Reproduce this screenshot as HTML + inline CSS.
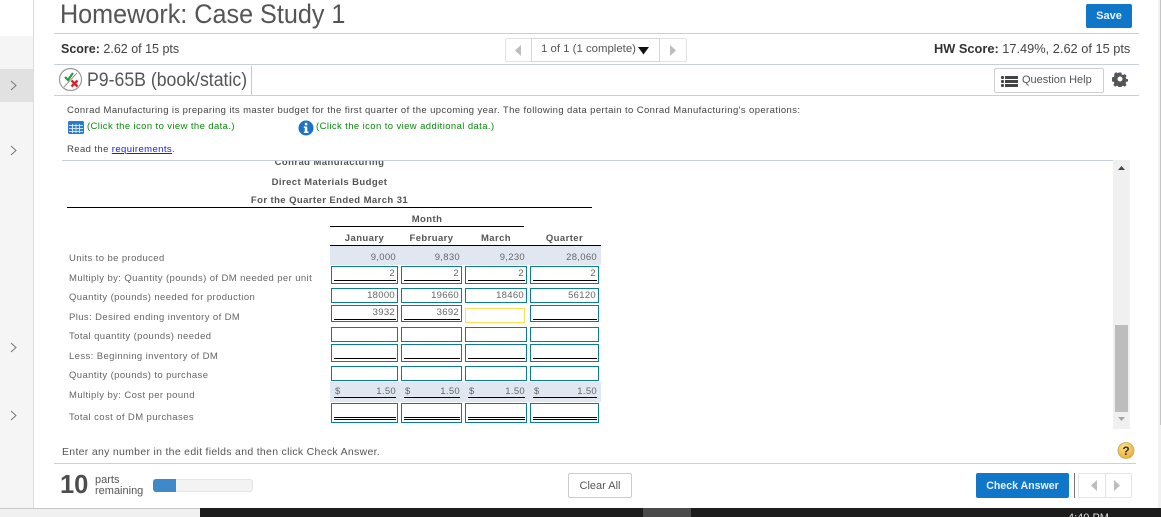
<!DOCTYPE html>
<html><head><meta charset="utf-8">
<style>
html,body{margin:0;padding:0;width:1161px;height:517px;overflow:hidden;background:#fff}
body{position:relative;font-family:"Liberation Sans",sans-serif;color:#4d4d4d}
.a{position:absolute;white-space:nowrap;line-height:1}
.r{position:absolute;box-sizing:border-box}
.l{font-size:9.5px;left:69px;letter-spacing:.4px;color:#666}
.h{font-size:9.5px;font-weight:bold;letter-spacing:.42px;color:#555;text-align:center}
.b{position:absolute;box-sizing:border-box;border:1px solid #0a7c93;background:#fff;font-size:9.5px;color:#666;text-align:right;padding-right:2px;letter-spacing:.3px;line-height:13px}
.u{position:absolute;height:1px;background:#000}
.v{position:absolute;font-size:9.5px;color:#666;text-align:right;letter-spacing:.3px;line-height:1}
</style></head><body>
<div class="r" style="left:0;top:36px;width:33px;height:472px;background:#f5f5f5"></div>
<div class="r" style="left:0;top:69px;width:33px;height:33px;background:#e1e1e1"></div>
<div class="r" style="left:33px;top:0;width:1px;height:508px;background:#dcdcdc"></div>
<svg class="r" style="left:0;top:0" width="33" height="430"><g fill="none" stroke="#777" stroke-width="1"><path d="M11 81l5 4.500-5 4.500M11 146l5 4.500-5 4.500M11 343l5 4.500-5 4.500M11 411l5 4.500-5 4.500"/></g></svg>

<div class="a" style="left:60px;top:1px;font-size:26.5px;color:#555;transform:scaleX(.95);transform-origin:0 0">Homework: Case Study 1</div>
<div class="r" style="left:1086px;top:4px;width:46px;height:24px;background:#0f76c8;border-radius:2px"></div>
<div class="a" style="left:1086px;top:11px;width:46px;text-align:center;font-size:11px;font-weight:bold;color:#e8f2fa">Save</div>
<div class="r" style="left:54px;top:33px;width:1085px;height:1px;background:#c8cfdc"></div>
<div class="a" style="left:61px;top:43px;font-size:12.5px;color:#333"><b>Score:</b> <span style="color:#444">2.62 of 15 pts</span></div>

<div class="r" style="left:505px;top:38px;width:182px;height:24px;border:1px solid #e3e3e3;border-radius:2px;background:#fff"></div>
<div class="r" style="left:531px;top:38px;width:129px;height:24px;border:1px solid #d6d6d6"></div>
<svg class="r" style="left:505px;top:44px" width="176" height="13"><path d="M16 1L10 6.500l6 5.500z" fill="#bdbdbd"/><path d="M165 1l6 5.500-6 5.500z" fill="#bdbdbd"/></svg>
<div class="a" style="left:541px;top:44px;font-size:11.4px;color:#555">1 of 1 (1 complete)</div>
<svg class="r" style="left:638px;top:47px" width="12" height="8"><path d="M0 0h11L5.500 7.500z" fill="#111"/></svg>
<div class="a" style="left:934px;top:43px;font-size:12.8px;color:#444"><b style="color:#333">HW Score:</b> 17.49%, 2.62 of 15 pts</div>
<div class="r" style="left:54px;top:64px;width:1085px;height:1px;background:#c8cfdc"></div>

<svg class="r" style="left:58px;top:67px" width="26" height="26">
<circle cx="12.500" cy="12.500" r="11" fill="#fff" stroke="#999" stroke-width="1.200"/>
<path d="M6 20L19 6" stroke="#999" stroke-width="1"/>
<path d="M7 10l3 3 5-7" fill="none" stroke="#2a9a3a" stroke-width="2.200"/>
<path d="M13.500 13.500l6 6M19.500 13.500l-6 6" fill="none" stroke="#d8232a" stroke-width="2.400"/>
</svg>
<div class="a" style="left:87px;top:71px;font-size:19px;color:#555;transform:scaleX(.93);transform-origin:0 0">P9-65B (book/static)</div>
<div class="r" style="left:251px;top:66px;width:1px;height:29px;background:#c9c9c9"></div>
<div class="r" style="left:994px;top:68px;width:110px;height:25px;border:1px solid #cfcfcf;border-radius:2px"></div>
<svg class="r" style="left:1001px;top:75px" width="18" height="13"><g fill="#444"><rect x="0" y="1" width="3" height="3" rx="1"/><rect x="0" y="5" width="3" height="3" rx="1"/><rect x="0" y="9" width="3" height="3" rx="1"/><rect x="4" y="1" width="13" height="3"/><rect x="4" y="5" width="13" height="3"/><rect x="4" y="9" width="13" height="3"/></g></svg>
<div class="a" style="left:1022px;top:75px;font-size:11px;color:#555">Question Help</div>
<svg class="r" style="left:1112px;top:71px" width="16" height="16" viewBox="0 0 16 16"><path d="M6.500 1h3l.4 2 1.500.7 1.800-1.100 2 2-1.100 1.800.7 1.500 2 .4v2.400l-2 .4-.7 1.500 1.100 1.800-2 2-1.800-1.100-1.500.7-.4 2h-3l-.4-2-1.500-.7-1.800 1.100-2-2 1.100-1.800-.7-1.500-2-.4V6.300l2-.4.7-1.500L1.700 2.600l2-2 1.800 1.100 1.500-.7z" transform="translate(.6 .6) scale(.92)" fill="#555"/><circle cx="8" cy="8" r="2.500" fill="#fff"/></svg>
<div class="r" style="left:54px;top:95px;width:1085px;height:1px;background:#c8cfdc"></div>

<div class="a" style="left:67px;top:105px;font-size:9.500px;letter-spacing:.395px;color:#444;top:106px">Conrad Manufacturing is preparing its master budget for the first quarter of the upcoming year. The following data pertain to Conrad Manufacturing's operations:</div>
<svg class="r" style="left:68px;top:121px" width="16" height="13"><rect width="16" height="13" rx="1.500" fill="#2b7bd0"/><g stroke="#cfe2f6" stroke-width="1"><path d="M1 4.500h14M1 7.500h14M1 10.500h14M4.500 3v9M8 3v9M11.500 3v9"/></g></svg>
<div class="a" style="left:87px;top:122px;font-size:9.5px;letter-spacing:.39px;color:#0a8a0a">(Click the icon to view the data.)</div>
<svg class="r" style="left:298px;top:120px" width="16" height="16"><circle cx="8" cy="8" r="7.500" fill="#1a73c8"/><rect x="6.800" y="2.800" width="2.500" height="2.500" fill="#fff"/><path d="M5.800 6.500h3.500v5h1.200v1.500H5.800v-1.500h1v-3.500h-1z" fill="#fff"/></svg>
<div class="a" style="left:316px;top:122px;font-size:9.5px;letter-spacing:.4px;color:#0a8a0a">(Click the icon to view additional data.)</div>
<div class="a" style="left:67px;top:144px;font-size:9.500px;letter-spacing:.4px;color:#444;top:145px">Read the <span style="color:#1a1ae0;text-decoration:underline">requirements</span>.</div>
<div class="r" style="left:62px;top:160px;width:1051px;height:1px;background:#c8cfdc"></div>

<div class="r" style="left:60px;top:161px;width:1050px;height:280px;overflow:hidden">
<div class="a h" style="left:0;top:-3px;width:539px">Conrad Manufacturing</div>
</div>
<div class="a h" style="left:60px;top:178px;width:539px">Direct Materials Budget</div>
<div class="a h" style="left:60px;top:196px;width:539px">For the Quarter Ended March 31</div>
<div class="u" style="left:67px;top:207px;width:525px"></div>
<div class="a h" style="left:330px;top:215px;width:194px">Month</div>
<div class="u" style="left:330px;top:226px;width:194px"></div>
<div class="a h" style="left:331px;top:234px;width:67px">January</div>
<div class="a h" style="left:401px;top:234px;width:61px">February</div>
<div class="a h" style="left:465px;top:234px;width:62px">March</div>
<div class="a h" style="left:530px;top:234px;width:69px">Quarter</div>
<div class="u" style="left:330px;top:245px;width:271px"></div>
<div class="r" style="left:330px;top:246px;width:271px;height:19px;background:#e1e7f1"></div>
<div class="v" style="left:331px;top:253px;width:65px">9,000</div>
<div class="v" style="left:401px;top:253px;width:59px">9,830</div>
<div class="v" style="left:465px;top:253px;width:60px">9,230</div>
<div class="v" style="left:530px;top:253px;width:67px">28,060</div>

<div class="a l" style="top:254px">Units to be produced</div>
<div class="a l" style="top:274px">Multiply by: Quantity (pounds) of DM needed per unit</div>
<div class="a l" style="top:293px">Quantity (pounds) needed for production</div>
<div class="a l" style="top:313px">Plus: Desired ending inventory of DM</div>
<div class="a l" style="top:332px">Total quantity (pounds) needed</div>
<div class="a l" style="top:352px">Less: Beginning inventory of DM</div>
<div class="a l" style="top:371px">Quantity (pounds) to purchase</div>
<div class="a l" style="top:391px">Multiply by: Cost per pound</div>
<div class="a l" style="top:413px">Total cost of DM purchases</div>

<!-- row 2 -->
<div class="b" style="left:331px;top:266px;width:67px;height:18px">2</div>
<div class="b" style="left:401px;top:266px;width:61px;height:18px">2</div>
<div class="b" style="left:465px;top:266px;width:62px;height:18px">2</div>
<div class="b" style="left:530px;top:266px;width:69px;height:18px">2</div>
<div class="u" style="left:334px;top:280px;width:62px"></div><div class="u" style="left:404px;top:280px;width:56px"></div><div class="u" style="left:468px;top:280px;width:57px"></div><div class="u" style="left:533px;top:280px;width:64px"></div>
<!-- row 3 -->
<div class="b" style="left:331px;top:288px;width:67px;height:15px;line-height:14px">18000</div>
<div class="b" style="left:401px;top:288px;width:61px;height:15px;line-height:14px">19660</div>
<div class="b" style="left:465px;top:288px;width:62px;height:15px;line-height:14px">18460</div>
<div class="b" style="left:530px;top:288px;width:69px;height:15px;line-height:14px">56120</div>
<!-- row 4 -->
<div class="b" style="left:331px;top:305px;width:67px;height:17px">3932</div>
<div class="b" style="left:401px;top:305px;width:61px;height:17px">3692</div>
<div class="b" style="left:465px;top:308px;width:60px;height:15px;border-color:#ffdc5a"></div>
<div class="b" style="left:530px;top:305px;width:69px;height:17px"></div>
<div class="u" style="left:334px;top:319px;width:62px"></div><div class="u" style="left:404px;top:319px;width:56px"></div><div class="u" style="left:533px;top:319px;width:64px"></div>
<!-- row 5 -->
<div class="b" style="left:331px;top:327px;width:67px;height:15px"></div>
<div class="b" style="left:401px;top:327px;width:61px;height:15px"></div>
<div class="b" style="left:465px;top:327px;width:62px;height:15px"></div>
<div class="b" style="left:530px;top:327px;width:69px;height:15px"></div>
<!-- row 6 -->
<div class="b" style="left:331px;top:344px;width:67px;height:18px"></div>
<div class="b" style="left:401px;top:344px;width:61px;height:18px"></div>
<div class="b" style="left:465px;top:344px;width:62px;height:18px"></div>
<div class="b" style="left:530px;top:344px;width:69px;height:18px"></div>
<div class="u" style="left:334px;top:358px;width:62px"></div><div class="u" style="left:404px;top:358px;width:56px"></div><div class="u" style="left:468px;top:358px;width:57px"></div><div class="u" style="left:533px;top:358px;width:64px"></div>
<!-- row 7 -->
<div class="b" style="left:331px;top:366px;width:67px;height:15px"></div>
<div class="b" style="left:401px;top:366px;width:61px;height:15px"></div>
<div class="b" style="left:465px;top:366px;width:62px;height:15px"></div>
<div class="b" style="left:530px;top:366px;width:69px;height:15px"></div>
<!-- $ row -->
<div class="r" style="left:330px;top:382px;width:271px;height:20px;background:#e1e7f1"></div>
<div class="v" style="left:335px;top:387px;text-align:left">$</div><div class="v" style="left:331px;top:387px;width:65px">1.50</div>
<div class="v" style="left:405px;top:387px;text-align:left">$</div><div class="v" style="left:401px;top:387px;width:59px">1.50</div>
<div class="v" style="left:469px;top:387px;text-align:left">$</div><div class="v" style="left:465px;top:387px;width:60px">1.50</div>
<div class="v" style="left:534px;top:387px;text-align:left">$</div><div class="v" style="left:530px;top:387px;width:67px">1.50</div>
<div class="u" style="left:334px;top:397px;width:62px"></div><div class="u" style="left:404px;top:397px;width:56px"></div><div class="u" style="left:468px;top:397px;width:57px"></div><div class="u" style="left:533px;top:397px;width:64px"></div>
<!-- total -->
<div class="b" style="left:331px;top:403px;width:67px;height:20px"></div>
<div class="b" style="left:401px;top:403px;width:61px;height:20px"></div>
<div class="b" style="left:465px;top:403px;width:62px;height:20px"></div>
<div class="b" style="left:530px;top:403px;width:69px;height:20px"></div>
<div class="u" style="left:334px;top:417px;width:62px"></div><div class="u" style="left:404px;top:417px;width:56px"></div><div class="u" style="left:468px;top:417px;width:57px"></div><div class="u" style="left:533px;top:417px;width:64px"></div>
<div class="u" style="left:334px;top:419px;width:62px"></div><div class="u" style="left:404px;top:419px;width:56px"></div><div class="u" style="left:468px;top:419px;width:57px"></div><div class="u" style="left:533px;top:419px;width:64px"></div>

<!-- scrollbar -->
<div class="r" style="left:1113px;top:160px;width:17px;height:269px;background:#f0f0f0"></div>
<div class="r" style="left:1115px;top:325px;width:13px;height:87px;background:#bdbdbd"></div>
<svg class="r" style="left:1113px;top:164px" width="17" height="8"><path d="M8.500 2l3.500 4H5z" fill="#444"/></svg>
<svg class="r" style="left:1113px;top:415px" width="17" height="8"><path d="M5 2h7l-3.500 4z" fill="#a5a5a5"/></svg>
<div class="r" style="left:1158px;top:0;width:3px;height:517px;background:#f0f0f0"></div>
<div class="r" style="left:1160px;top:0;width:1px;height:425px;background:#c4c4c4"></div>

<div class="a" style="left:62px;top:447px;font-size:10.5px;letter-spacing:.3px;color:#555">Enter any number in the edit fields and then click Check Answer.</div>
<svg class="r" style="left:1117px;top:441px" width="18" height="20"><defs><radialGradient id="g" cx=".4" cy=".3" r=".8"><stop offset="0" stop-color="#ffe08a"/><stop offset="1" stop-color="#e9a92d"/></radialGradient></defs><circle cx="9" cy="9.500" r="8" fill="url(#g)" stroke="#c9a657" stroke-width=".8"/><text x="9" y="14" text-anchor="middle" font-family="Liberation Sans" font-size="12" font-weight="bold" fill="#333">?</text></svg>
<div class="r" style="left:54px;top:463px;width:1082px;height:1px;background:#cfcfd8"></div>

<div class="a" style="left:60px;top:473px;font-size:25.5px;font-weight:bold;color:#4d4d4d">10</div>
<div class="a" style="left:95px;top:475px;font-size:11px;line-height:11px;color:#555;white-space:normal;width:60px">parts<br>remaining</div>
<div class="r" style="left:153px;top:479px;width:100px;height:13px;background:#f3f3f3;border:1px solid #e4e4e4;border-radius:3px"></div>
<div class="r" style="left:153px;top:479px;width:23px;height:13px;background:#3f88c9;border-radius:3px 0 0 3px"></div>

<div class="r" style="left:568px;top:473px;width:64px;height:25px;background:#fff;border:1px solid #ccc;border-radius:2px"></div>
<div class="a" style="left:568px;top:481px;width:64px;text-align:center;font-size:11px;color:#555">Clear All</div>
<div class="r" style="left:976px;top:473px;width:93px;height:25px;background:#0f76c8;border-radius:2px"></div>
<div class="a" style="left:976px;top:481px;width:93px;text-align:center;font-size:10.6px;font-weight:bold;color:#e8f2fa">Check Answer</div>
<div class="r" style="left:1074px;top:473px;width:1px;height:25px;background:#777"></div>
<div class="r" style="left:1078px;top:473px;width:54px;height:25px;border:1px solid #e3e3e3;border-radius:2px"></div>
<div class="r" style="left:1105px;top:473px;width:1px;height:25px;background:#e3e3e3"></div>
<svg class="r" style="left:1085px;top:479px" width="42" height="13"><path d="M12 1L6 6.500l6 5.500z" fill="#bdbdbd"/><path d="M29 1l6 5.500-6 5.500z" fill="#bdbdbd"/></svg>

<div class="r" style="left:0;top:508px;width:200px;height:1px;background:#c8c8c8"></div>
<div class="r" style="left:0;top:509px;width:200px;height:8px;background:#f0f0f0"></div>
<div class="r" style="left:200px;top:508px;width:961px;height:9px;background:#1c1c1c"></div>
<div class="r" style="left:643px;top:508px;width:48px;height:9px;background:#4a4a4a"></div>
<div class="a" style="left:1068px;top:513px;font-size:11px;color:#ddd">4:40 PM</div>
</body></html>
